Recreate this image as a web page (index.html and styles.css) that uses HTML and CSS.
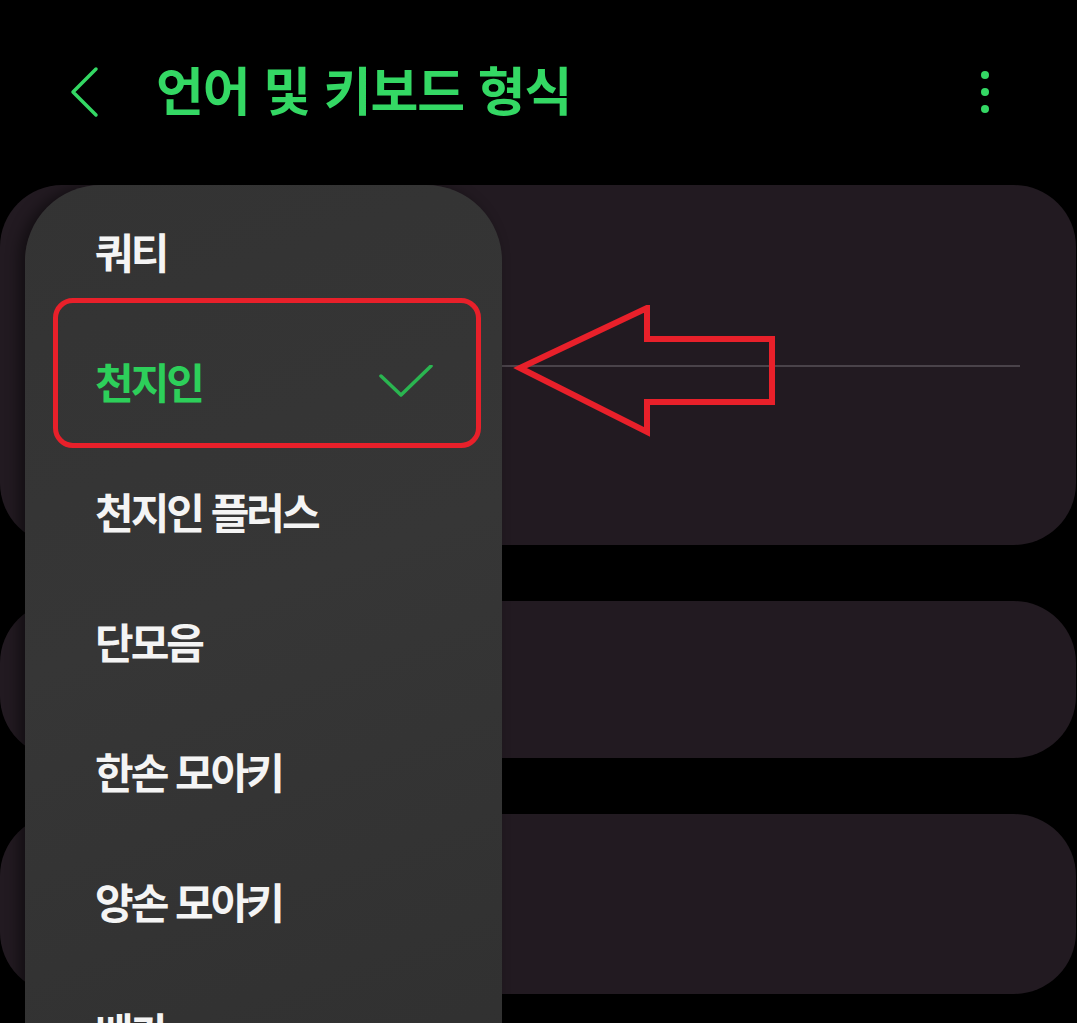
FILE: index.html
```html
<!DOCTYPE html>
<html lang="ko">
<head>
<meta charset="utf-8">
<title>언어 및 키보드 형식</title>
<link rel="stylesheet" href="styles.css">
</head>
<body>
<div class="screen">
  <header class="topbar">
    <div class="back">
      <svg width="34" height="52" viewBox="0 0 34 52"><polyline points="28,3 5,26 28,49" fill="none" stroke="#34d864" stroke-width="3.5" stroke-linecap="round" stroke-linejoin="round"/></svg>
    </div>
    <h1 class="title">언어 및 키보드 형식</h1>
    <div class="kebab"><span></span><span></span><span></span></div>
  </header>

  <main class="cards">
    <section class="card card-1">
      <div class="card-top"></div>
      <div class="divider"></div>
      <div class="card-bottom"></div>
    </section>
    <section class="card card-2"></section>
    <section class="card card-3"></section>
  </main>

  <div class="menu">
    <div class="menu-item">쿼티</div>
    <div class="menu-item selected">천지인
      <svg class="check" width="56" height="34" viewBox="0 0 56 34"><polyline points="3,11 23,30 53,1" fill="none" stroke="#2ab550" stroke-width="3.5" stroke-linecap="round" stroke-linejoin="round"/></svg>
    </div>
    <div class="menu-item">천지인 플러스</div>
    <div class="menu-item">단모음</div>
    <div class="menu-item">한손 모아키</div>
    <div class="menu-item">양손 모아키</div>
    <div class="menu-item">베가</div>
  </div>

  <div class="highlight"></div>
  <svg class="arrow" width="270" height="140" viewBox="0 0 270 140">
    <polygon points="8,63 135,3 135,34 260,34 260,97 135,97 135,127" fill="none" stroke="#e8202a" stroke-width="6" stroke-linejoin="miter"/>
  </svg>
</div>
</body>
</html>
```

FILE: styles.css
```css
html, body {
  margin: 0;
  padding: 0;
  background: #000;
}

.screen {
  position: relative;
  width: 1077px;
  height: 1023px;
  overflow: hidden;
  background: #000;
  font-family: "Noto Sans CJK KR", "Noto Sans", sans-serif;
}

.topbar {
  height: 185px;
  display: flex;
  align-items: flex-start;
  box-sizing: border-box;
  padding-top: 66px;
}

.back {
  width: 34px;
  margin-left: 68px;
}

.title {
  margin: -9px 0 0 54px;
  font-size: 52px;
  font-weight: 700;
  letter-spacing: -1px;
  color: #34d864;
  line-height: 64px;
  flex: 1;
}

.kebab {
  width: 10px;
  margin-right: 86px;
  margin-top: 5px;
  display: flex;
  flex-direction: column;
  gap: 9px;
}

.kebab span {
  display: block;
  width: 8px;
  height: 8px;
  border-radius: 50%;
  background: #34d864;
}

.cards {
  display: flex;
  flex-direction: column;
  gap: 56px;
  padding: 0 1px 0 0;
}

.card {
  background: #221a21;
  border-radius: 62px;
}

.card-1 {
  height: 360px;
  display: flex;
  flex-direction: column;
}

.card-top {
  height: 180px;
}

.divider {
  height: 2px;
  background: #4a434a;
  margin: 0 56px 0 502px;
}

.card-bottom {
  flex: 1;
}

.card-2 {
  height: 157px;
}

.card-3 {
  height: 180px;
}

.menu {
  position: absolute;
  left: 25px;
  top: 185px;
  width: 477px;
  height: 920px;
  border-radius: 76px 76px 0 0;
  background: linear-gradient(160deg, #333333 0%, #363636 45%, #303030 100%);
  box-shadow: -6px 0 14px rgba(0, 0, 0, 0.45);
}

.menu-item {
  height: 130px;
  display: flex;
  align-items: center;
  justify-content: space-between;
  padding: 0 70px;
  font-size: 42px;
  font-weight: 700;
  letter-spacing: -3px;
  color: #f4f4f4;
}

.menu-item.selected {
  color: #2dcf5a;
}

.check {
  margin-right: -2px;
  margin-top: 4px;
}

.highlight {
  position: absolute;
  left: 53px;
  top: 298px;
  width: 428px;
  height: 150px;
  box-sizing: border-box;
  border: 5px solid #e8202a;
  border-radius: 20px;
}

.arrow {
  position: absolute;
  left: 512px;
  top: 305px;
}
```
